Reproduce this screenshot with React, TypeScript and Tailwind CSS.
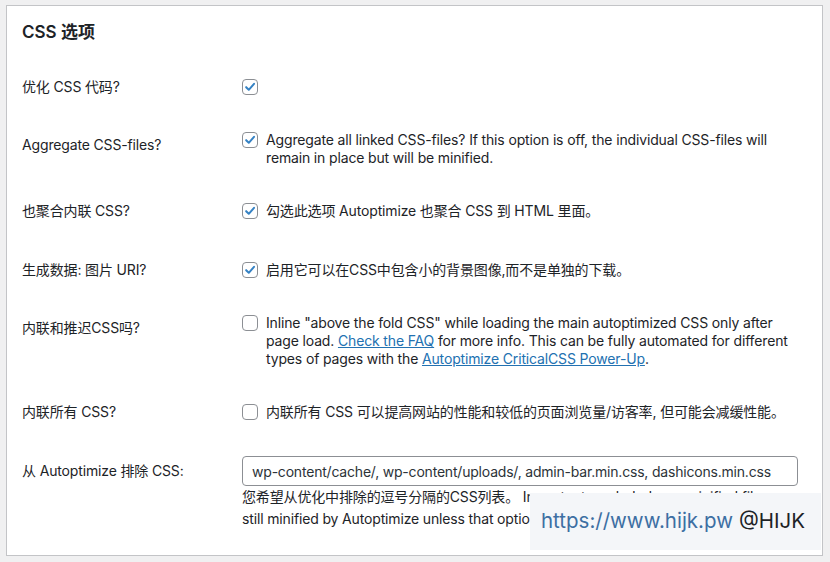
import React from "react";

const Checkbox = ({ checked }: { checked: boolean }) => (
   <span className="mt-[1px] flex h-4 w-4 shrink-0 items-center justify-center rounded-[4px] border border-[#8c8f94] bg-white">
      {checked && (
         <svg viewBox="0 0 16 16" className="h-[14px] w-[14px]">
            <path
               d="M3.6 8.2 L6.6 11.2 L12.6 4.4"
               fill="none"
               stroke="#3582c4"
               strokeWidth="2.3"
               strokeLinecap="round"
               strokeLinejoin="round"
            />
         </svg>
      )}
   </span>
);

const Row = ({
   label,
   height,
   contentPad,
   children,
}: {
   label: string;
   height: string;
   contentPad: string;
   children: React.ReactNode;
}) => (
   <div className={`flex ${height}`}>
      <div className="w-[220px] shrink-0 pt-[20px] leading-[18px]">{label}</div>
      <div className={`flex-1 ${contentPad}`}>{children}</div>
   </div>
);

const Option = ({
   checked,
   children,
}: {
   checked: boolean;
   children?: React.ReactNode;
}) => (
   <div className="flex items-start gap-2 leading-[18px]">
      <Checkbox checked={checked} />
      {children && <div>{children}</div>}
   </div>
);

export default function App() {
   return (
      <div className="relative h-[562px] w-[830px] overflow-hidden bg-[#f0f0f1] pt-[5px] pl-[6px] font-[Inter,'Noto_Sans_CJK_SC',sans-serif] text-[14px] tracking-[-0.15px] text-[#1d2327]">
         <div className="h-[551px] w-[817px] border border-[#c3c4c7] bg-white pt-[14px] pl-[15px]">
            <h2 className="text-[17px] leading-[24px] font-semibold tracking-normal">CSS 选项</h2>

            <div className="mt-[14px]">
               <Row label="优化 CSS 代码?" height="h-[58px]" contentPad="pt-[20px]">
                  <Option checked />
               </Row>

               <Row label="Aggregate CSS-files?" height="h-[66px]" contentPad="pt-[15px]">
                  <Option checked>
                     <span className="block whitespace-nowrap">
                        Aggregate all linked CSS-files? If this option is off, the individual CSS-files will
                     </span>
                     <span className="block whitespace-nowrap">remain in place but will be minified.</span>
                  </Option>
               </Row>

               <Row label="也聚合内联 CSS?" height="h-[59px]" contentPad="pt-[20px]">
                  <Option checked>勾选此选项 Autoptimize 也聚合 CSS 到 HTML 里面。</Option>
               </Row>

               <Row label="生成数据: 图片 URI?" height="h-[58px]" contentPad="pt-[20px]">
                  <Option checked>启用它可以在CSS中包含小的背景图像,而不是单独的下载。</Option>
               </Row>

               <Row label="内联和推迟CSS吗?" height="h-[84px]" contentPad="pt-[15px]">
                  <Option checked={false}>
                     <span className="block whitespace-nowrap">
                        Inline "above the fold CSS" while loading the main autoptimized CSS only after
                     </span>
                     <span className="block whitespace-nowrap">
                        page load.{" "}
                        <a href="#" className="text-[#2271b1] underline">
                           Check the FAQ
                        </a>{" "}
                        for more info. This can be fully automated for different
                     </span>
                     <span className="block whitespace-nowrap">
                        types of pages with the{" "}
                        <a href="#" className="text-[#2271b1] underline">
                           Autoptimize CriticalCSS Power-Up
                        </a>
                        .
                     </span>
                  </Option>
               </Row>

               <Row label="内联所有 CSS?" height="h-[59px]" contentPad="pt-[20px]">
                  <Option checked={false}>
                     内联所有 CSS 可以提高网站的性能和较低的页面浏览量/访客率, 但可能会减缓性能。
                  </Option>
               </Row>

               <Row label="从 Autoptimize 排除 CSS:" height="h-[112px]" contentPad="pt-[14px]">
                  <input
                     type="text"
                     readOnly
                     value="wp-content/cache/, wp-content/uploads/, admin-bar.min.css, dashicons.min.css"
                     className="h-[30px] w-[556px] rounded-[4px] border border-[#8c8f94] bg-white px-[9px] text-[14px] tracking-[-0.2px] text-[#2c3338] outline-none"
                  />
                  <p className="leading-[22px]">
                     <span className="block whitespace-nowrap">
                        您希望从优化中排除的逗号分隔的CSS列表。 Important: excluded non-minified files are
                     </span>
                     <span className="block whitespace-nowrap">
                        still minified by Autoptimize unless that option under "JS, CSS &amp; HTML" is disabled.
                     </span>
                  </p>
               </Row>
            </div>
         </div>

         {/* watermark overlay */}
         <div className="absolute top-[493px] left-[530px] flex h-[57px] w-[291px] items-center bg-[#f4f6f9] pl-[11px] text-[20.5px] tracking-normal">
            <span className="text-[#3d6fa3]">https://www.hijk.pw</span>
            <span className="ml-[6px] text-[#1d2327]">@HIJK</span>
         </div>
      </div>
   );
}
